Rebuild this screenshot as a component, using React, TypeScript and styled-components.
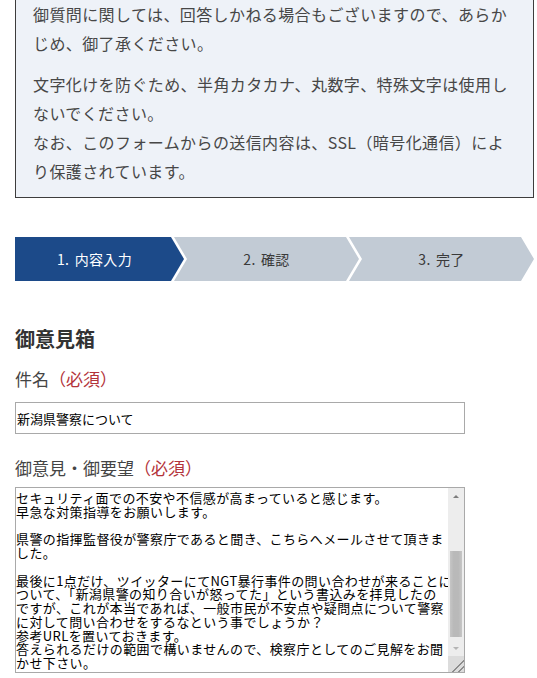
import { useLayoutEffect, useRef, useState } from "react";
import styled, { createGlobalStyle } from "styled-components";

const GlobalStyle = createGlobalStyle`
  html, body {
    margin: 0;
    padding: 0;
    background: #fff;
  }
  body {
    font-family: "Noto Sans CJK JP", "Noto Sans", sans-serif;
    color: #333;
    overflow: hidden;
  }
`;

const Page = styled.div`
  width: 519px;
  padding: 0 3px 0 15px;
`;

const Notice = styled.div`
  margin-top: -17px;
  border: 1px solid #3d3d3d;
  background: #eef2f8;
  padding: 16px 10px 11px 17px;
`;

const NoticeText = styled.p`
  margin: 0;
  font-size: 16px;
  line-height: 29px;
  letter-spacing: 0.4px;
  color: #474747;

  & + & {
    margin-top: 12px;
  }
`;

const Steps = styled.ol`
  list-style: none;
  display: flex;
  height: 44px;
  margin: 39px 0 0;
  padding: 0;
`;

const Step = styled.li<{ $active?: boolean; $first?: boolean }>`
  flex: 1 1 0;
  display: flex;
  align-items: center;
  justify-content: center;
  padding: ${(p) => (p.$first ? "0 10px 0 0" : "0 13px")};
  margin-left: ${(p) => (p.$first ? "0" : "-10px")};
  font-size: 14px;
  word-spacing: 2px;
  letter-spacing: 0.3px;
  background: ${(p) => (p.$active ? "#1c4a89" : "#c2cbd5")};
  color: ${(p) => (p.$active ? "#fff" : "#3a3a3a")};
  clip-path: ${(p) =>
    p.$first
      ? "polygon(0 0, calc(100% - 13px) 0, 100% 50%, calc(100% - 13px) 100%, 0 100%)"
      : "polygon(0 0, calc(100% - 13px) 0, 100% 50%, calc(100% - 13px) 100%, 0 100%, 13px 50%)"};
`;

const Heading = styled.h2`
  margin: 43px 0 0;
  font-size: 20px;
  line-height: 30px;
  font-weight: 700;
  color: #333;
`;

const Label = styled.label<{ $gap: number }>`
  display: block;
  margin-top: ${(p) => p.$gap}px;
  font-size: 17px;
  line-height: 27px;
  color: #444;
`;

const Required = styled.span`
  color: #b3333a;
`;

const TextInput = styled.input`
  display: block;
  box-sizing: border-box;
  width: 450px;
  height: 32px;
  margin-top: 10px;
  padding: 0 1px;
  border: 1px solid #a9a9a9;
  font-family: "Noto Sans CJK JP", sans-serif;
  font-size: 13px;
  color: #000;
  outline: none;
`;

const AreaFrame = styled.div`
  display: flex;
  box-sizing: border-box;
  width: 450px;
  height: 186px;
  margin-top: 6px;
  border: 1px solid #a9a9a9;
  background: #fff;
`;

const MessageArea = styled.textarea`
  flex: 1;
  min-width: 0;
  margin: 0;
  padding: 0;
  border: none;
  font-family: "Noto Sans CJK JP", sans-serif;
  font-size: 13px;
  line-height: 13.75px;
  letter-spacing: 0.4px;
  color: #000;
  white-space: pre;
  overflow-y: scroll;
  overflow-x: hidden;
  outline: none;
  resize: none;
  scrollbar-width: none;

  &::-webkit-scrollbar {
    display: none;
  }
`;

const Rail = styled.div`
  display: flex;
  flex-direction: column;
  width: 16px;
  background: #ededed;
`;

const RailButton = styled.div`
  height: 16px;
  display: flex;
  align-items: center;
  justify-content: center;
`;

const Arrow = styled.span<{ $dir: "up" | "down" }>`
  width: 0;
  height: 0;
  border-left: 3px solid transparent;
  border-right: 3px solid transparent;
  ${(p) =>
    p.$dir === "up"
      ? "border-bottom: 3px solid #7d7d7d;"
      : "border-top: 3px solid #b4b4b4;"}
`;

const Track = styled.div`
  position: relative;
  flex: 1;
`;

const Thumb = styled.div`
  position: absolute;
  left: 2px;
  right: 2px;
  background: linear-gradient(to right, #c6c6c6, #b9b9b9 30%, #b9b9b9 70%, #c6c6c6);
`;

const Grip = styled.div`
  height: 16px;
  background: linear-gradient(
      135deg,
      transparent 0 62%,
      #8c8c8c 62% 67%,
      transparent 67% 80%,
      #8c8c8c 80% 85%,
      transparent 85%
    ),
    #dcdcdc;
`;

const message = [
  "お忙しいところ失礼いたします。",
  "新潟県警察の対応について、御意見をお送りさせて頂きます。",
  "",
  "先日報道されたNGT暴行事件に関して、新潟県警察の捜査や",
  "情報管理の在り方について、県民の一人として大変心配して",
  "おります。",
  "報道やSNS上の情報を見る限り、県警の情報管理体制など、",
  "",
  "セキュリティ面での不安や不信感が高まっていると感じます。",
  "早急な対策指導をお願いします。",
  "",
  "県警の指揮監督役が警察庁であると聞き、こちらへメールさせて頂きま",
  "した。",
  "",
  "最後に1点だけ、ツイッターにてNGT暴行事件の問い合わせが来ることに",
  "ついて、「新潟県警の知り合いが怒ってた」という書込みを拝見したの",
  "ですが、これが本当であれば、一般市民が不安点や疑問点について警察",
  "に対して問い合わせをするなという事でしょうか？",
  "参考URLを置いておきます。",
  "答えられるだけの範囲で構いませんので、検察庁としてのご見解をお聞",
  "かせ下さい。",
].join("\n");

const steps = ["1. 内容入力", "2. 確認", "3. 完了"];

export default function App() {
  const areaRef = useRef<HTMLTextAreaElement>(null);
  const trackRef = useRef<HTMLDivElement>(null);
  const [thumb, setThumb] = useState({ top: 46, height: 87 });

  const syncThumb = () => {
    const el = areaRef.current;
    const track = trackRef.current;
    if (!el || !track) return;
    const h = track.clientHeight;
    const size = Math.max(20, (h * el.clientHeight) / el.scrollHeight);
    const top = (h * el.scrollTop) / el.scrollHeight;
    setThumb({ top: Math.min(top, h - size - 3), height: size });
  };

  useLayoutEffect(() => {
    const el = areaRef.current;
    if (el) el.scrollTop = el.scrollHeight;
    syncThumb();
  }, []);

  return (
    <Page>
      <GlobalStyle />
      <Notice>
        <NoticeText>
          御質問に関しては、回答しかねる場合もございますので、あらか
          <br />
          じめ、御了承ください。
        </NoticeText>
        <NoticeText>
          文字化けを防ぐため、半角カタカナ、丸数字、特殊文字は使用し
          <br />
          ないでください。
          <br />
          なお、このフォームからの送信内容は、SSL（暗号化通信）によ
          <br />
          り保護されています。
        </NoticeText>
      </Notice>

      <Steps>
        {steps.map((s, i) => (
          <Step key={s} $first={i === 0} $active={i === 0}>
            {s}
          </Step>
        ))}
      </Steps>

      <Heading>御意見箱</Heading>

      <Label $gap={11} htmlFor="subject">
        件名<Required>（必須）</Required>
      </Label>
      <TextInput id="subject" type="text" defaultValue="新潟県警察について" />

      <Label $gap={20} htmlFor="message">
        御意見・御要望<Required>（必須）</Required>
      </Label>
      <AreaFrame>
        <MessageArea id="message" ref={areaRef} defaultValue={message} onScroll={syncThumb} />
        <Rail>
          <RailButton>
            <Arrow $dir="up" />
          </RailButton>
          <Track ref={trackRef}>
            <Thumb style={{ top: thumb.top, height: thumb.height }} />
          </Track>
          <RailButton>
            <Arrow $dir="down" />
          </RailButton>
          <Grip />
        </Rail>
      </AreaFrame>
    </Page>
  );
}
